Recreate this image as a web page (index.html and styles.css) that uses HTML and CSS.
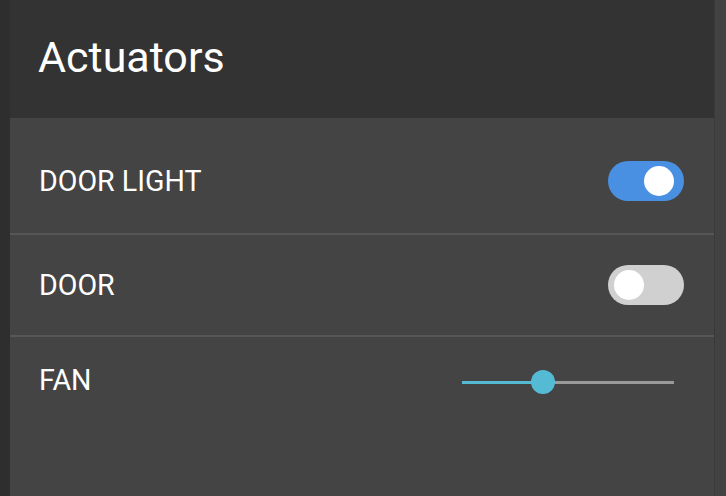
FILE: index.html
```html
<!DOCTYPE html>
<html>
<head>
<meta charset="utf-8">
<link rel="stylesheet" href="styles.css">
</head>
<body>
<div class="app">
  <div class="side-left"></div>
  <div class="panel">
    <div class="header"><h1 class="title">Actuators</h1></div>
    <div class="list">
      <div class="row row-first">
        <span class="label">DOOR LIGHT</span>
        <span class="toggle toggle-on"><span class="knob"></span></span>
      </div>
      <div class="row row-mid">
        <span class="label">DOOR</span>
        <span class="toggle toggle-off"><span class="knob"></span></span>
      </div>
      <div class="row row-last">
        <span class="label">FAN</span>
        <div class="slider">
          <div class="fill" style="width:35.4%"></div>
          <div class="thumb"></div>
          <div class="rest"></div>
        </div>
      </div>
    </div>
  </div>
  <div class="side-right"></div>
</div>
</body>
</html>
```
FILE: styles.css
```css
html, body {
  margin: 0;
  padding: 0;
  height: 100%;
  background: #444444;
  font-family: Roboto, "Liberation Sans", sans-serif;
}
.app {
  display: flex;
  height: 496px;
}
.side-left {
  width: 10px;
  background: #2e2e2e;
}
.side-right {
  width: 11px;
  background: #424242;
  border-left: 1px solid #3a3a3a;
}
.panel {
  flex: 1;
  display: flex;
  flex-direction: column;
  background: #444444;
}
.header {
  height: 118px;
  background: #333333;
  display: flex;
  align-items: center;
  padding-left: 28px;
}
.title {
  margin: 0;
  color: #ffffff;
  font-size: 43px;
  font-weight: 400;
  padding-bottom: 4px;
}
.list {
  display: flex;
  flex-direction: column;
}
.row {
  display: flex;
  align-items: center;
  justify-content: space-between;
  padding: 0 30px 0 29px;
  border-bottom: 2px solid #565656;
}
.row-first {
  padding-top: 10px;
  box-sizing: border-box;
  height: 117px;
}
.row-mid {
  height: 100px;
}
.row-last {
  border-bottom: none;
  height: 86px;
}
.label {
  color: #ffffff;
  font-size: 28.6px;
  font-weight: 400;
}
.toggle {
  width: 76px;
  height: 40px;
  border-radius: 20px;
  display: flex;
  align-items: center;
  padding: 0 5px;
  box-sizing: border-box;
}
.toggle-on {
  background: #4a90e2;
  justify-content: flex-end;
  padding-right: 10px;
}
.toggle-off {
  background: #d0d0d0;
  justify-content: flex-start;
  padding-left: 6px;
}
.knob {
  width: 30px;
  height: 30px;
  border-radius: 50%;
  background: #ffffff;
}
.slider {
  width: 212px;
  height: 24px;
  display: flex;
  align-items: center;
  margin-right: 10px;
  margin-top: 4px;
}
.fill {
  height: 3px;
  background: #55bbd5;
}
.thumb {
  width: 24px;
  height: 24px;
  border-radius: 50%;
  background: #55bbd5;
  margin: 0 -6px;
  position: relative;
  z-index: 1;
  flex: none;
}
.rest {
  flex: 1;
  height: 3px;
  background: #9a9a9a;
}
```
